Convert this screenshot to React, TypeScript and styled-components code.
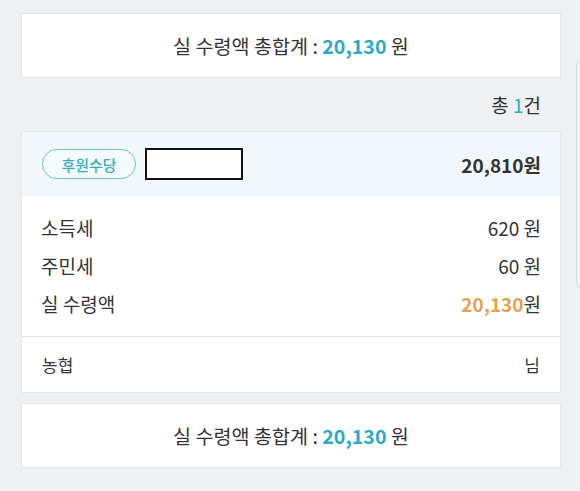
import React from 'react';
import styled, { createGlobalStyle } from 'styled-components';

const GlobalStyle = createGlobalStyle`
  html, body {
    margin: 0;
    padding: 0;
    background: #eef0f2;
  }
  body {
    font-family: "Noto Sans CJK KR", "Noto Sans", sans-serif;
    color: #333;
  }
`;

const Page = styled.div`
  position: relative;
  width: 580px;
  height: 491px;
  overflow: hidden;
  padding: 13px 19px 0 21px;
  box-sizing: border-box;
`;

const TotalCard = styled.div`
  background: #fff;
  border: 1px solid #e4e6e9;
  height: 65px;
  box-sizing: border-box;
  display: flex;
  align-items: center;
  justify-content: center;
  font-size: 19.6px;
  color: #333;
`;

const Accent = styled.span<{ $color: string; $bold?: boolean }>`
  color: ${(p) => p.$color};
  font-weight: ${(p) => (p.$bold ? 700 : 400)};
`;

const CountRow = styled.div`
  height: 53px;
  display: flex;
  align-items: center;
  justify-content: flex-end;
  padding-right: 20px;
  font-size: 19px;
`;

const ItemCard = styled.div`
  background: #fff;
  border: 1px solid #e4e6e9;
  margin-bottom: 10px;
`;

const ItemHeader = styled.div`
  background: #f1f7fa;
  height: 64px;
  display: flex;
  align-items: center;
  padding: 0 19px 0 20px;
  gap: 9px;
`;

const Pill = styled.span`
  display: inline-flex;
  align-items: center;
  justify-content: center;
  height: 30px;
  width: 94px;
  box-sizing: border-box;
  border: 1px solid #6cc6d0;
  border-radius: 15px;
  color: #39adbd;
  font-size: 15px;
  font-weight: 500;
  background: #f4fbfc;
`;

const Masked = styled.span`
  width: 98px;
  height: 32px;
  box-sizing: border-box;
  border: 2px solid #111;
  background: #fff;
`;

const HeaderAmount = styled.span`
  margin-left: auto;
  font-size: 19px;
  font-weight: 700;
  color: #333;
`;

const ItemBody = styled.div`
  padding: 12px 19px 14px 19px;
  border-bottom: 1px solid #e4e6e9;
`;

const Row = styled.div`
  height: 38px;
  display: flex;
  align-items: center;
  justify-content: space-between;
  font-size: 19px;
`;

const BankRow = styled.div`
  height: 55px;
  display: flex;
  align-items: center;
  justify-content: space-between;
  padding: 0 20px 0 20px;
  font-size: 17px;
`;

const ScrollHint = styled.div`
  position: absolute;
  right: -6px;
  top: 60px;
  width: 8px;
  height: 226px;
  border: 1px solid #d6d8db;
  border-radius: 5px;
  background: #f4f5f6;
`;

const TEAL = '#2aa9c9';
const ORANGE = '#e6a150';

const deductions = [
  { label: '소득세', value: '620 원' },
  { label: '주민세', value: '60 원' },
];

const Total = () => (
  <TotalCard>
    실 수령액 총합계 :&nbsp;<Accent $color={TEAL} $bold>20,130</Accent>&nbsp;원
  </TotalCard>
);

export default function App() {
  return (
    <>
      <GlobalStyle />
      <Page>
        <Total />
        <CountRow>
          총&nbsp;<Accent $color={TEAL}>1</Accent>건
        </CountRow>
        <ItemCard>
          <ItemHeader>
            <Pill>후원수당</Pill>
            <Masked />
            <HeaderAmount>20,810원</HeaderAmount>
          </ItemHeader>
          <ItemBody>
            {deductions.map((d) => (
              <Row key={d.label}>
                <span>{d.label}</span>
                <span>{d.value}</span>
              </Row>
            ))}
            <Row>
              <span>실 수령액</span>
              <span>
                <Accent $color={ORANGE} $bold>20,130</Accent>원
              </span>
            </Row>
          </ItemBody>
          <BankRow>
            <span>농협</span>
            <span>님</span>
          </BankRow>
        </ItemCard>
        <Total />
        <ScrollHint />
      </Page>
    </>
  );
}
